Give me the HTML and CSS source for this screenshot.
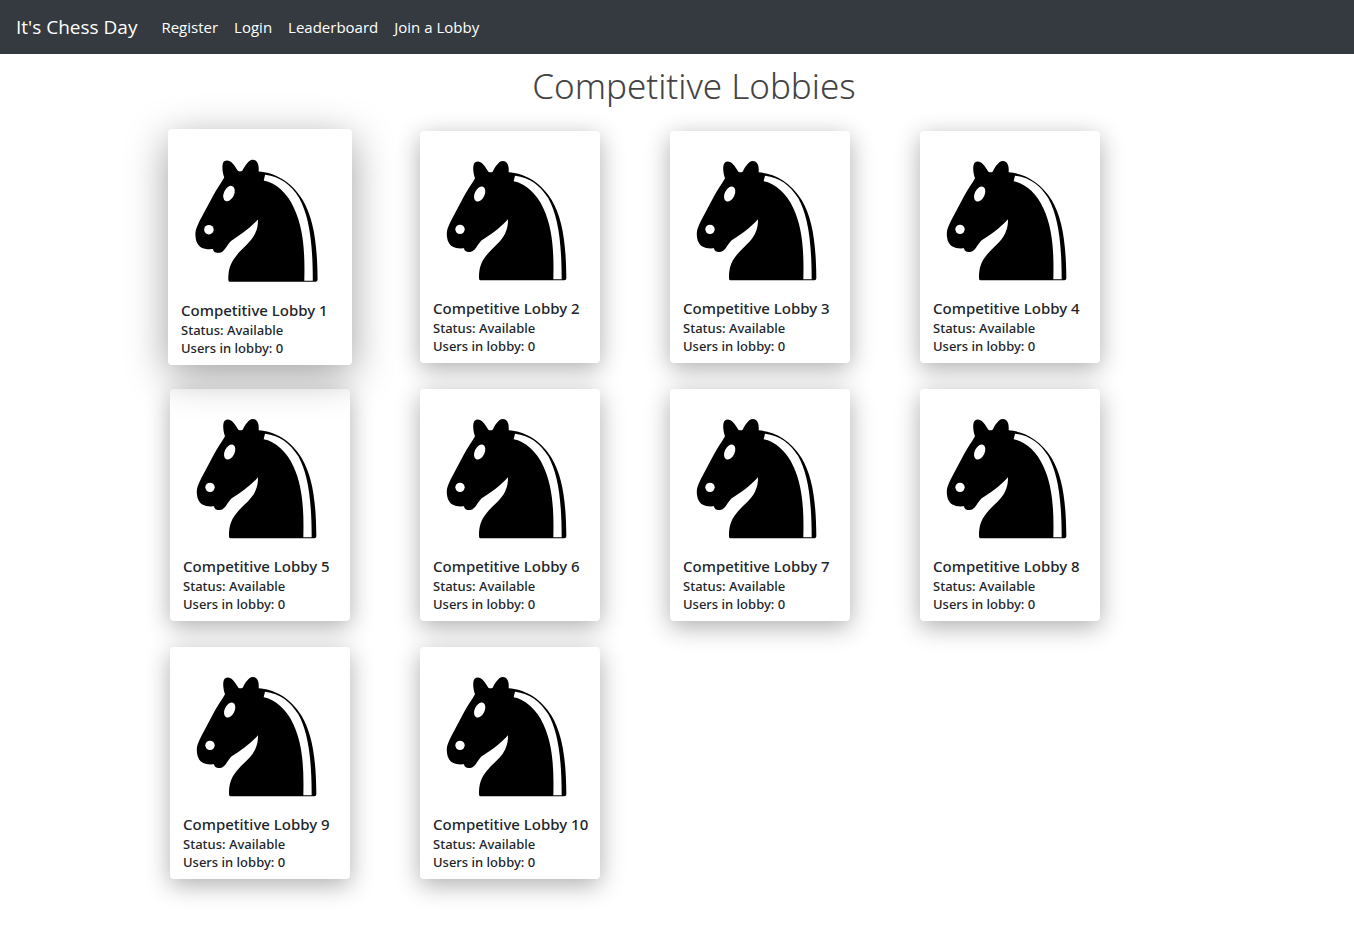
FILE: index.html
```html
<!DOCTYPE html>
<html lang="en">
<head>
<meta charset="utf-8">
<title>It's Chess Day</title>
<link rel="stylesheet" href="styles.css">
</head>
<body>
<svg class="defs" aria-hidden="true">
  <symbol id="knight" viewBox="0 0 540 498">
    <g transform="translate(60 72)">
      <path d="M121 376Q117 376 117 370C117 340 122 322 140 300C162 273 182 262 195 236C203 220 204 208 204 193C180 220 150 240 125 256C112 268 106 290 90 291C80 292 73 289 72 280C45 282 30 276 23 256C17 230 22 221 33 197L72 124C83 103 97 85 105 70C98 50 98 30 104 23C112 17 122 20 129 28C136 35 140 43 145 50Q151 54 158 50C164 38 170 29 178 22C184 17 192 17 198 21C205 27 207 38 206 52C250 55 300 78 335 135C367 190 378 260 379 370Q379 376 373 376Z"/>
      <g fill="#fff">
        <path d="M225 62C270 68 300 90 325 130C352 180 365 250 365 373L340 373C342 290 338 220 310 160C290 115 255 85 221 79Z"/>
        <circle cx="60" cy="223" r="14"/>
        <ellipse cx="119" cy="117" rx="15" ry="24" transform="rotate(25 119 117)"/>
      </g>
    </g>
  </symbol>
</svg>
<nav class="navbar">
  <a class="brand" href="#">It's Chess Day</a>
  <a class="nav-link" href="#">Register</a>
  <a class="nav-link" href="#">Login</a>
  <a class="nav-link" href="#">Leaderboard</a>
  <a class="nav-link" href="#">Join a Lobby</a>
</nav>
<main class="page">
  <h1 class="heading">Competitive Lobbies</h1>
  <div class="lobbies">
    <a class="card raised" href="#"><svg class="knight" aria-hidden="true"><use href="#knight"/></svg><h2 class="title">Competitive Lobby 1</h2><p class="info">Status: Available</p><p class="info">Users in lobby: 0</p></a>
    <a class="card" href="#"><svg class="knight" aria-hidden="true"><use href="#knight"/></svg><h2 class="title">Competitive Lobby 2</h2><p class="info">Status: Available</p><p class="info">Users in lobby: 0</p></a>
    <a class="card" href="#"><svg class="knight" aria-hidden="true"><use href="#knight"/></svg><h2 class="title">Competitive Lobby 3</h2><p class="info">Status: Available</p><p class="info">Users in lobby: 0</p></a>
    <a class="card" href="#"><svg class="knight" aria-hidden="true"><use href="#knight"/></svg><h2 class="title">Competitive Lobby 4</h2><p class="info">Status: Available</p><p class="info">Users in lobby: 0</p></a>
    <a class="card" href="#"><svg class="knight" aria-hidden="true"><use href="#knight"/></svg><h2 class="title">Competitive Lobby 5</h2><p class="info">Status: Available</p><p class="info">Users in lobby: 0</p></a>
    <a class="card" href="#"><svg class="knight" aria-hidden="true"><use href="#knight"/></svg><h2 class="title">Competitive Lobby 6</h2><p class="info">Status: Available</p><p class="info">Users in lobby: 0</p></a>
    <a class="card" href="#"><svg class="knight" aria-hidden="true"><use href="#knight"/></svg><h2 class="title">Competitive Lobby 7</h2><p class="info">Status: Available</p><p class="info">Users in lobby: 0</p></a>
    <a class="card" href="#"><svg class="knight" aria-hidden="true"><use href="#knight"/></svg><h2 class="title">Competitive Lobby 8</h2><p class="info">Status: Available</p><p class="info">Users in lobby: 0</p></a>
    <a class="card" href="#"><svg class="knight" aria-hidden="true"><use href="#knight"/></svg><h2 class="title">Competitive Lobby 9</h2><p class="info">Status: Available</p><p class="info">Users in lobby: 0</p></a>
    <a class="card" href="#"><svg class="knight" aria-hidden="true"><use href="#knight"/></svg><h2 class="title">Competitive Lobby 10</h2><p class="info">Status: Available</p><p class="info">Users in lobby: 0</p></a>
  </div>
</main>
</body>
</html>
```
FILE: styles.css
```css
* { box-sizing: border-box; }
body {
  margin: 0;
  background: #fff;
  color: #212529;
  font-family: "Segoe UI", "Open Sans", "Noto Sans", sans-serif;
}
a { color: inherit; text-decoration: none; }
.defs { display: none; }
.navbar {
  display: flex;
  align-items: center;
  gap: 16px;
  min-height: 54px;
  padding: 0 16px 1px;
  background: #343a40;
  color: #fff;
}
.brand { margin-right: 8px; font-size: 19px; line-height: 30px; }
.nav-link { font-size: 15px; line-height: 24px; }
.page { padding: 10px 0 48px 34px; }
.heading {
  margin: 0 0 23px;
  color: #444;
  font-family: "Segoe UI", "Noto Sans", "Open Sans", sans-serif;
  font-size: 35px;
  font-weight: 300;
  line-height: 44px;
  text-align: center;
}
.lobbies {
  display: grid;
  grid-template-columns: repeat(auto-fill, 180px);
  gap: 26px 70px;
  max-width: 1048px;
  margin: 0 auto;
}
.card {
  position: relative;
  padding-bottom: 8px;
  border-radius: 4px;
  background: #fff;
  font-family: "Segoe UI", "Noto Sans", "Open Sans", sans-serif;
  box-shadow: 0 6px 24px rgba(0, 0, 0, .32);
}
.raised {
  z-index: 1;
  margin: -2px;
  padding-bottom: 8px;
  box-shadow: 0 10px 40px rgba(0, 0, 0, .38);
}
.knight { display: block; width: 100%; height: 166px; }
.raised .knight { height: 170px; }
.title, .info { margin: 0 0 0 13px; white-space: nowrap; }
.title { font-size: 15px; font-weight: 500; line-height: 22px; }
.info { font-size: 13px; font-weight: 500; line-height: 18px; }
```
